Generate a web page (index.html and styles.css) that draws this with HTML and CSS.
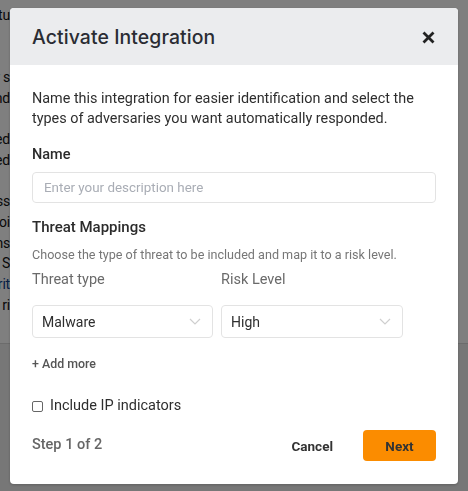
FILE: index.html
```html
<!DOCTYPE html>
<html>
<head>
<meta charset="utf-8">
<link rel="stylesheet" href="styles.css">
</head>
<body>
<div class="page">
  <div class="page-top">
    <div class="bg-col">
      <div class="bg-line">Statu</div>
      <div class="bg-line"></div>
      <div class="bg-line"></div>
      <div class="bg-line">for s</div>
      <div class="bg-line">and</div>
      <div class="bg-line"></div>
      <div class="bg-line">ected</div>
      <div class="bg-line">ected</div>
      <div class="bg-line"></div>
      <div class="bg-line">ss</div>
      <div class="bg-line">oi</div>
      <div class="bg-line">ns</div>
      <div class="bg-line">S</div>
      <div class="bg-line link">rit</div>
      <div class="bg-line">ri</div>
    </div>
  </div>
  <div class="page-bottom"></div>
</div>
<div class="overlay">
  <div class="modal">
    <div class="modal-header">
      <h2 class="modal-title">Activate Integration</h2>
      <button class="close-btn" aria-label="Close">
        <svg width="13" height="13" viewBox="0 0 13 13"><path d="M1.5 1.5 L11.5 11.5 M11.5 1.5 L1.5 11.5" stroke="#222" stroke-width="2.8" stroke-linecap="butt"/></svg>
      </button>
    </div>
    <div class="modal-body">
      <p class="intro">Name this integration for easier identification and select the types of adversaries you want automatically responded.</p>
      <div class="label">Name</div>
      <div class="input">Enter your description here</div>
      <div class="section-title">Threat Mappings</div>
      <div class="hint">Choose the type of threat to be included and map it to a risk level.</div>
      <div class="map-grid">
        <div class="col-label">Threat type</div>
        <div class="col-label">Risk Level</div>
        <div class="select"><span>Malware</span><svg width="12" height="7" viewBox="0 0 12 7"><path d="M1 1 L6 6 L11 1" fill="none" stroke="#cfcfcf" stroke-width="1.2"/></svg></div>
        <div class="select"><span>High</span><svg width="12" height="7" viewBox="0 0 12 7"><path d="M1 1 L6 6 L11 1" fill="none" stroke="#cfcfcf" stroke-width="1.2"/></svg></div>
      </div>
      <div class="add-more">+ Add more</div>
      <label class="check-row"><span class="checkbox"></span>Include IP indicators</label>
      <div class="footer">
        <div class="step">Step 1 of 2</div>
        <div class="actions">
          <button class="btn-cancel">Cancel</button>
          <button class="btn-next">Next</button>
        </div>
      </div>
    </div>
  </div>
</div>
</body>
</html>
```

FILE: styles.css
```css
html, body {
  margin: 0;
  padding: 0;
  height: 100%;
}
body {
  font-family: Roboto, "Liberation Sans", sans-serif;
  background: #ffffff;
  overflow: hidden;
}
.page {
  height: 100%;
  display: flex;
  flex-direction: column;
}
.page-top {
  height: 343px;
  background: #ffffff;
  border-bottom: 1px solid #d8d8d8;
}
.page-bottom {
  flex: 1;
  background: #eeeeee;
}
.bg-col {
  margin-left: -60px;
  width: 70px;
  padding-top: 5px;
  text-align: right;
  overflow: hidden;
  white-space: nowrap;
  font-size: 14px;
  color: #111;
}
.bg-line {
  height: 20.7px;
  line-height: 20.7px;
  letter-spacing: -0.2px;
}
.bg-line.link {
  color: #0b3d8c;
}
.overlay {
  position: fixed;
  inset: 0;
  background: rgba(0, 0, 0, 0.5);
  display: flex;
  justify-content: center;
  padding-top: 8px;
}
.modal {
  width: 448px;
  height: 476px;
  background: #ffffff;
  border-radius: 4px;
  overflow: hidden;
  display: flex;
  flex-direction: column;
  box-shadow: 0 1px 3px rgba(0,0,0,0.2);
}
.modal-header {
  height: 57px;
  background: #ebecee;
  display: flex;
  align-items: center;
  justify-content: space-between;
  padding: 0 23px 0 22px;
  flex-shrink: 0;
}
.modal-title {
  margin: 0;
  font-family: Inter, "Open Sans", sans-serif;
  font-weight: 500;
  font-size: 19.4px;
  color: #2a2c33;
  letter-spacing: 0.1px;
}
.close-btn {
  border: 0;
  background: none;
  padding: 0;
  margin-top: 2px;
  display: flex;
}
.modal-body {
  padding: 24px 22px 23px 22px;
  display: flex;
  flex-direction: column;
  flex: 1;
}
.intro {
  margin: 0;
  font-size: 14.4px;
  line-height: 20px;
  color: #2e2e2e;
}
.label {
  margin-top: 16px;
  font-size: 14.5px;
  line-height: 20px;
  font-weight: 500;
  color: #2b2b2b;
}
.input {
  margin-top: 7px;
  height: 31px;
  box-sizing: border-box;
  border: 1px solid #e3e3e3;
  border-radius: 4px;
  padding: 0 11px;
  display: flex;
  align-items: center;
  font-size: 13.4px;
  color: #a9adb5;
}
.section-title {
  margin-top: 14px;
  font-size: 15px;
  line-height: 20px;
  font-weight: 500;
  color: #2b2b2b;
}
.hint {
  margin-top: 9px;
  font-size: 12.6px;
  line-height: 18px;
  color: #777;
}
.map-grid {
  margin-top: 6px;
  display: grid;
  grid-template-columns: 181px 182px;
  column-gap: 8px;
  row-gap: 15px;
}
.col-label {
  font-size: 14.5px;
  line-height: 20px;
  color: #6a6a6a;
}
.select {
  height: 33px;
  box-sizing: border-box;
  border: 1px solid #e3e3e3;
  border-radius: 4px;
  padding: 0 11px 0 9px;
  display: flex;
  align-items: center;
  justify-content: space-between;
  font-size: 14px;
  color: #2e2e2e;
}
.add-more {
  margin-top: 17px;
  font-size: 12.4px;
  line-height: 18px;
  font-weight: 500;
  color: #555;
}
.check-row {
  margin-top: 23px;
  display: flex;
  align-items: center;
  font-size: 14.5px;
  line-height: 20px;
  color: #2e2e2e;
}
.checkbox {
  width: 9px;
  height: 9px;
  border: 1px solid #666;
  border-radius: 2px;
  margin-right: 7px;
  margin-top: 1px;
}
.footer {
  margin-top: auto;
  display: flex;
  align-items: center;
  justify-content: space-between;
}
.step {
  font-size: 14.5px;
  font-weight: 500;
  color: #666;
  margin-top: -2px;
}
.actions {
  display: flex;
  align-items: center;
  gap: 30px;
}
.btn-cancel, .btn-next {
  font-family: Roboto, "Liberation Sans", sans-serif;
  font-size: 13.5px;
  font-weight: 700;
  color: #333;
  border: 0;
  background: none;
  padding: 0;
}
.btn-next {
  width: 73px;
  height: 31px;
  background: #fb8c00;
  border-radius: 4px;
}
```
